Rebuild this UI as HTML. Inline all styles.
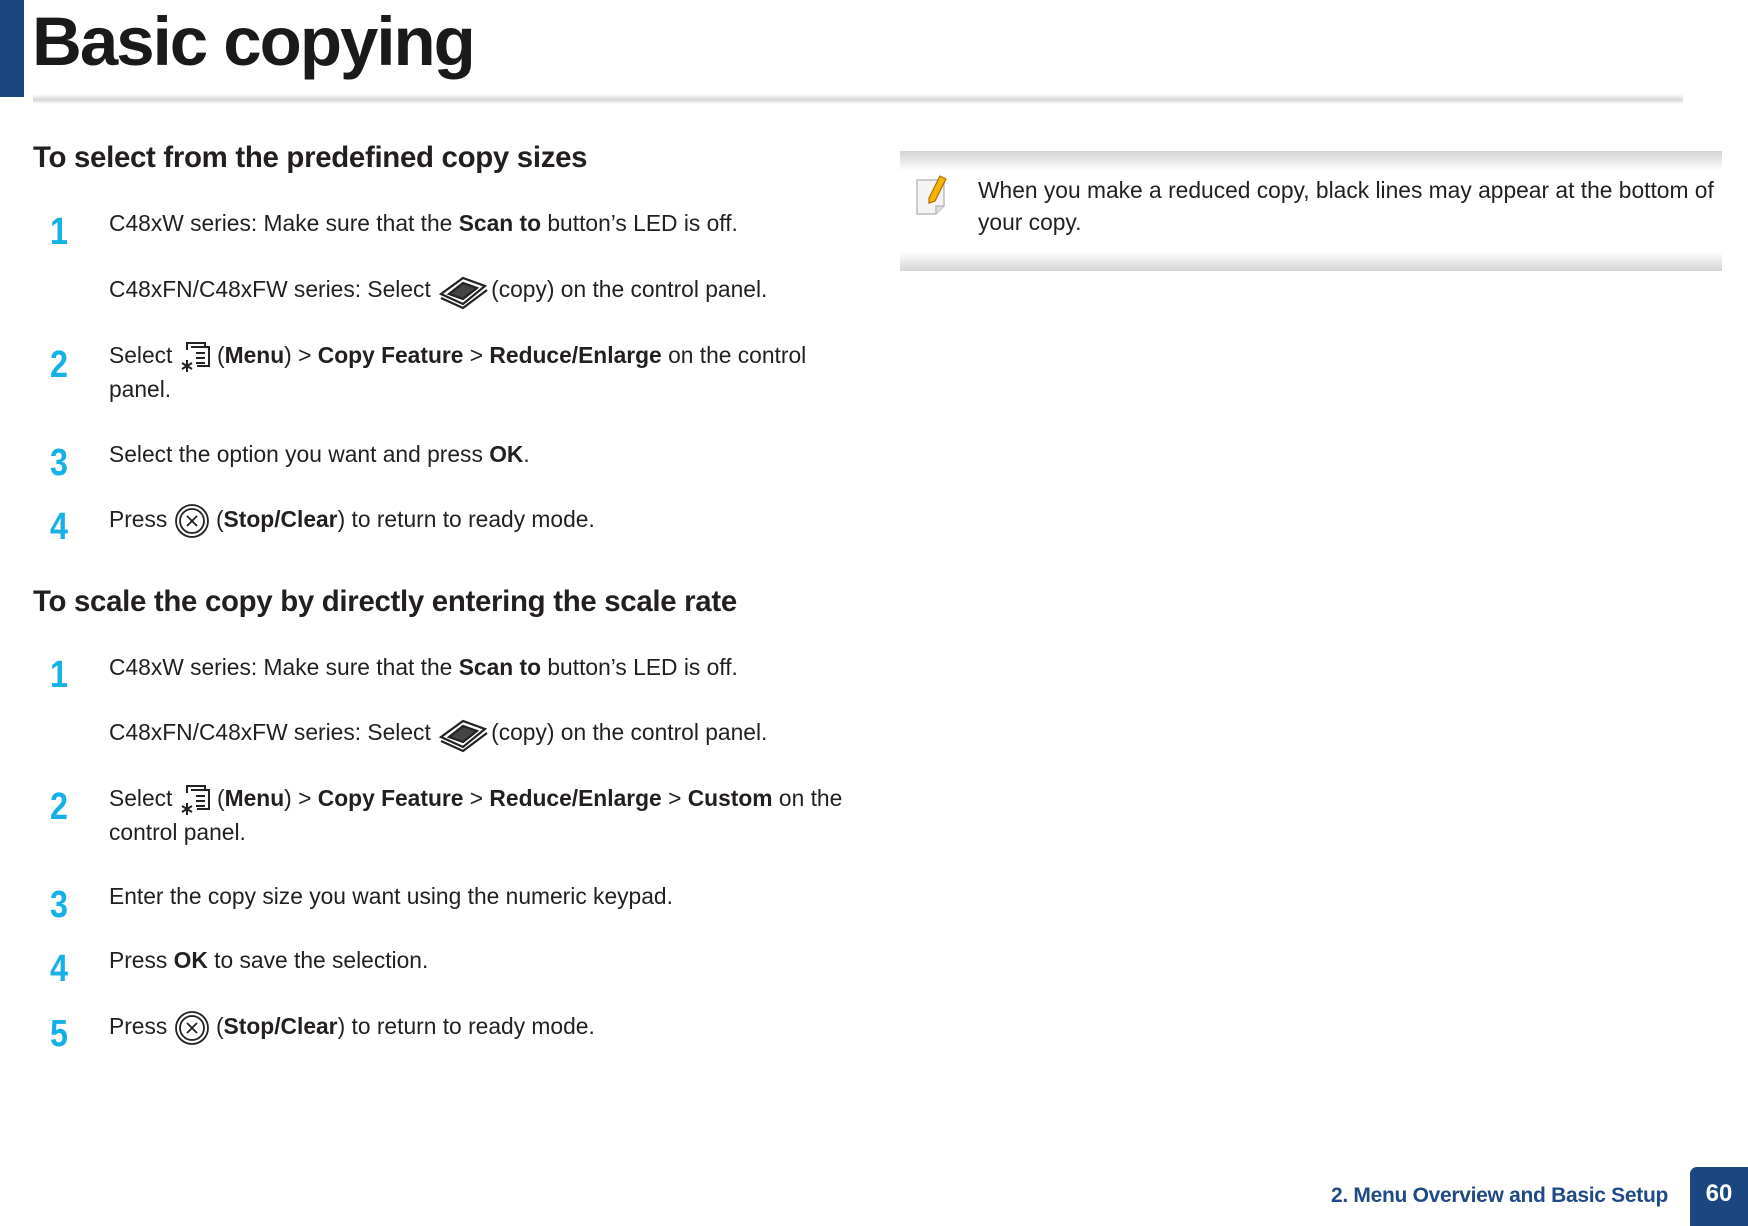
<!DOCTYPE html>
<html><head><meta charset="utf-8">
<style>
*{margin:0;padding:0;box-sizing:border-box}
body{width:1748px;height:1226px;background:#fff;position:relative;overflow:hidden;font-family:"Liberation Sans",sans-serif;color:#231f20}
.a{position:absolute;white-space:nowrap}
.t{font-size:22.8px;line-height:30px;letter-spacing:0}
.n{font-size:38px;font-weight:bold;color:#15b0e6;line-height:40px;left:50px;transform:scaleX(0.85);transform-origin:left}
.h{font-size:29.4px;font-weight:bold;left:33px;letter-spacing:-0.3px}
b{font-weight:bold}
svg{vertical-align:middle}
</style></head><body>
<div class="a" style="left:0;top:0;width:24px;height:97px;background:#1c4680"></div>
<div class="a" style="left:32px;top:2px;font-size:69px;font-weight:bold;letter-spacing:-2px;line-height:80px;color:#1a1a1a">Basic copying</div>
<div class="a" style="left:33px;top:94px;width:1650px;height:10px;background:linear-gradient(to bottom,#fff,#d6d6d6 60%,#fff);"></div>

<div class="a h" style="top:141px">To select from the predefined copy sizes</div>
<div class="a n" style="top:212px">1</div>
<div class="a t" style="left:109px;top:208px">C48xW series: Make sure that the <b>Scan to</b> button’s LED is off.</div>
<div class="a t" style="left:109px;top:272px">C48xFN/C48xFW series: Select <svg width="54" height="38" viewBox="0 0 54 38"><g fill="none" stroke="#222" stroke-width="2.2"><path d="M4 22 L26 6 L48 14 L26 32 Z"/><path d="M4 26 L26 36 L50 18"/><path d="M12 22 L26 11 L40 16 L26 27 Z" fill="#444"/></g></svg>(copy) on the control panel.</div>
<div class="a n" style="top:345px">2</div>
<div class="a t" style="left:109px;top:340px">Select <svg width="32" height="34" viewBox="0 0 32 34"><g fill="none" stroke="#222" stroke-width="2"><path d="M8 10 V3 H26 V6"/><path d="M12 7 H30 V26 H18"/><path d="M17 13h9M17 18h9M17 23h9"/><path d="M8 20v12M3 23l10 6M13 23l-10 6"/></g></svg> (<b>Menu</b>) &gt; <b>Copy Feature</b> &gt; <b>Reduce/Enlarge</b> on the control</div>
<div class="a t" style="left:109px;top:374px">panel.</div>
<div class="a n" style="top:443px">3</div>
<div class="a t" style="left:109px;top:439px">Select the option you want and press <b>OK</b>.</div>
<div class="a n" style="top:507px">4</div>
<div class="a t" style="left:109px;top:503px">Press <svg width="36" height="36" viewBox="0 0 36 36"><g fill="none" stroke="#222" stroke-width="1.8"><circle cx="18" cy="18" r="16"/><circle cx="18" cy="18" r="12"/><path d="M13 13l10 10M23 13l-10 10"/></g></svg> (<b>Stop/Clear</b>) to return to ready mode.</div>

<div class="a h" style="top:585px">To scale the copy by directly entering the scale rate</div>
<div class="a n" style="top:655px">1</div>
<div class="a t" style="left:109px;top:652px">C48xW series: Make sure that the <b>Scan to</b> button’s LED is off.</div>
<div class="a t" style="left:109px;top:715px">C48xFN/C48xFW series: Select <svg width="54" height="38" viewBox="0 0 54 38"><g fill="none" stroke="#222" stroke-width="2.2"><path d="M4 22 L26 6 L48 14 L26 32 Z"/><path d="M4 26 L26 36 L50 18"/><path d="M12 22 L26 11 L40 16 L26 27 Z" fill="#444"/></g></svg>(copy) on the control panel.</div>
<div class="a n" style="top:787px">2</div>
<div class="a t" style="left:109px;top:783px">Select <svg width="32" height="34" viewBox="0 0 32 34"><g fill="none" stroke="#222" stroke-width="2"><path d="M8 10 V3 H26 V6"/><path d="M12 7 H30 V26 H18"/><path d="M17 13h9M17 18h9M17 23h9"/><path d="M8 20v12M3 23l10 6M13 23l-10 6"/></g></svg> (<b>Menu</b>) &gt; <b>Copy Feature</b> &gt; <b>Reduce/Enlarge</b> &gt; <b>Custom</b> on the</div>
<div class="a t" style="left:109px;top:817px">control panel.</div>
<div class="a n" style="top:885px">3</div>
<div class="a t" style="left:109px;top:881px">Enter the copy size you want using the numeric keypad.</div>
<div class="a n" style="top:949px">4</div>
<div class="a t" style="left:109px;top:945px">Press <b>OK</b> to save the selection.</div>
<div class="a n" style="top:1014px">5</div>
<div class="a t" style="left:109px;top:1010px">Press <svg width="36" height="36" viewBox="0 0 36 36"><g fill="none" stroke="#222" stroke-width="1.8"><circle cx="18" cy="18" r="16"/><circle cx="18" cy="18" r="12"/><path d="M13 13l10 10M23 13l-10 10"/></g></svg> (<b>Stop/Clear</b>) to return to ready mode.</div>

<div class="a" style="left:900px;top:151px;width:822px;height:20px;background:linear-gradient(to bottom,#d4d4d4,#fff)"></div>
<div class="a" style="left:900px;top:252px;width:822px;height:19px;background:linear-gradient(to bottom,#fff,#d4d4d4)"></div>
<svg class="a" style="left:914px;top:172px" width="46" height="46" viewBox="0 0 46 46"><path d="M3 8 H30 V34 L22 42 H3 Z" fill="#f4f4f4" stroke="#bbb" stroke-width="1.5"/><path d="M22 42 V34 H30" fill="#ddd" stroke="#bbb" stroke-width="1.5"/><path d="M15 26 L26 4 L32 7 L21 29 L15 31 Z" fill="#f7b500" stroke="#b07000" stroke-width="1.2"/></svg>
<div class="a t" style="left:978px;top:175px">When you make a reduced copy, black lines may appear at the bottom of</div>
<div class="a t" style="left:978px;top:207px">your copy.</div>

<div class="a" style="right:80px;top:1183px;font-size:21px;font-weight:bold;color:#1f4a85;line-height:26px;letter-spacing:-0.3px">2. Menu Overview and Basic Setup</div>
<div class="a" style="left:1690px;top:1167px;width:58px;height:59px;background:#1c4680;border-radius:7px 0 0 0;color:#fff;font-weight:bold;font-size:24px;line-height:54px;text-align:center">60</div>
</body></html>
